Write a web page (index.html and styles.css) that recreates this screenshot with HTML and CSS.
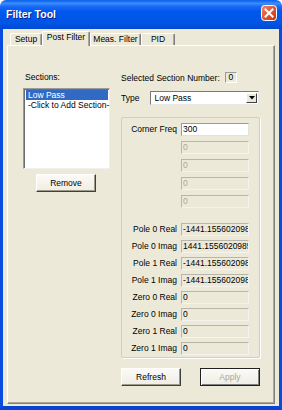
FILE: index.html
```html
<!DOCTYPE html>
<html lang="en">
  <head>
    <meta charset="UTF-8" />
    <meta name="viewport" content="width=device-width, initial-scale=1.0" />
    <title>Filter Tool</title>
    <link rel="stylesheet" href="styles.css">
  </head>

  <body>
    <div class="window">
      <div class="titlebar">
        <span class="title">Filter Tool</span>
        <span class="close">
          <svg width="16" height="16" viewBox="0 0 16 16">
            <defs>
              <linearGradient id="rod" x1="0" y1="0" x2="1" y2="1">
                <stop offset="0" stop-color="#f08a6c" />
                <stop offset="0.45" stop-color="#e15a36" />
                <stop offset="1" stop-color="#c1360f" />
              </linearGradient>
            </defs>
            <rect x="0.5" y="0.5" width="15" height="15" rx="3" fill="url(#rod)" stroke="#fff" />
            <path d="M4.5 4.5 L11.5 11.5 M11.5 4.5 L4.5 11.5" stroke="#fff" stroke-width="2" stroke-linecap="square" />
          </svg>
        </span>
      </div>

      <div class="frame">
        <div class="client">
          <nav class="tabs">
            <span class="tab setup">Setup</span>
            <span class="tab post valgt">Post Filter</span>
            <span class="tab meas">Meas. Filter</span>
            <span class="tab pid">PID</span>
          </nav>

          <div class="panel">
            <div class="sections">
              <div class="label">Sections:</div>
              <div class="listbox">
                <div class="item selected">Low Pass</div>
                <div class="item">-Click to Add Section-</div>
              </div>
              <button class="btn remove">Remove</button>
            </div>

            <div class="detail">
              <div class="selrow">
                <span>Selected Section Number:</span>
                <span class="numbox">0</span>
              </div>
              <div class="typerow">
                <span>Type</span>
                <div class="combo">
                  <span>Low Pass</span>
                  <span class="drop">
                    <svg width="6" height="4" viewBox="0 0 6 4"><path d="M0 0 H6 L3 3.5 Z" fill="#000" /></svg>
                  </span>
                </div>
              </div>

              <div class="group">
                <div class="rows top">
                  <span class="name">Corner Freq</span><div class="field">300</div>
                  <span class="name"></span><div class="field disabled">0</div>
                  <span class="name"></span><div class="field disabled">0</div>
                  <span class="name"></span><div class="field disabled">0</div>
                  <span class="name"></span><div class="field disabled">0</div>
                </div>
                <div class="rows bottom">
                  <span class="name">Pole 0 Real</span><div class="field readonly">-1441.155602098</div>
                  <span class="name">Pole 0 Imag</span><div class="field readonly">1441.1556020985</div>
                  <span class="name">Pole 1 Real</span><div class="field readonly">-1441.155602098</div>
                  <span class="name">Pole 1 Imag</span><div class="field readonly">-1441.155602098</div>
                  <span class="name">Zero 0 Real</span><div class="field readonly">0</div>
                  <span class="name">Zero 0 Imag</span><div class="field readonly">0</div>
                  <span class="name">Zero 1 Real</span><div class="field readonly">0</div>
                  <span class="name">Zero 1 Imag</span><div class="field readonly">0</div>
                </div>
              </div>

              <div class="buttons">
                <button class="btn">Refresh</button>
                <button class="btn default" disabled>Apply</button>
              </div>
            </div>
          </div>
        </div>
      </div>
    </div>
  </body>
</html>
```

FILE: styles.css
```css
* {
  box-sizing: border-box;
}

body {
  margin: 0;
  font-family: "Liberation Sans", Arial, sans-serif;
  font-size: 8.5px;
  color: #000;
}

.window {
  width: 282px;
  height: 410px;
  overflow: hidden;
}

.titlebar {
  height: 29px;
  display: flex;
  justify-content: space-between;
  align-items: flex-start;
  padding: 0 5px 0 6px;
  border-radius: 6px 6px 0 0;
  background: linear-gradient(#0a5fe8 0%, #3a8dfd 12%, #1a6af5 22%, #0058ee 40%, #0055e5 80%, #0049d2 100%);
}

.title {
  margin-top: 8px;
  color: #fff;
  font-weight: bold;
  font-size: 10.5px;
  text-shadow: 1px 1px #0a1c8c;
}

.close {
  margin-top: 5px;
  width: 16px;
  height: 16px;
}

.close svg {
  display: block;
}

.frame {
  height: 381px;
  border-left: 3px solid #0b4be0;
  border-right: 3px solid #0b4be0;
  border-bottom: 4px solid #0a42d2;
}

.client {
  height: 100%;
  background-color: #ece9d8;
  padding: 2px 4px 0 4px;
}

.tabs {
  height: 14px;
  display: flex;
  align-items: flex-end;
  padding-left: 3px;
  position: relative;
  z-index: 1;
}

.tab {
  height: 12px;
  line-height: 11px;
  text-align: center;
  border: 1px solid #fff;
  border-bottom: none;
  border-right-color: #808080;
  box-shadow: inset -1px 0 #aca899;
  border-radius: 2px 2px 0 0;
  background-color: #ece9d8;
}

.setup {
  width: 32px;
}

.post {
  width: 48px;
}

.meas {
  width: 51px;
}

.pid {
  width: 34px;
}

.tab.valgt {
  height: 15px;
  line-height: 11px;
  padding-bottom: 3px;
  margin-bottom: -1px;
}

.panel {
  height: 359px;
  display: flex;
  gap: 11px;
  padding: 26px 0 0 15px;
  border: 1px solid #fff;
  border-right-color: #808080;
  border-bottom-color: #808080;
  box-shadow: inset -1px -1px #aca899;
}

.sections {
  width: 87px;
  display: flex;
  flex-direction: column;
}

.label {
  line-height: 11px;
  padding-left: 2px;
}

.listbox {
  margin-top: 5px;
  height: 81px;
  background: #fff;
  border: 1px solid;
  border-color: #9a9a9a #f0f0f0 #f0f0f0 #9a9a9a;
  box-shadow: inset 1px 1px #6e6e6e;
  padding: 1px 1px 0 2px;
}

.item {
  height: 10px;
  line-height: 10px;
  padding-left: 2px;
  white-space: nowrap;
}

.item.selected {
  background-color: #316ac5;
  color: #fff;
}

.btn {
  font-family: inherit;
  font-size: 8.5px;
  color: #000;
  width: 60px;
  height: 18px;
  padding: 0;
  background: linear-gradient(#fbfaf6, #efede3);
  border: 1px solid;
  border-color: #fff #404040 #404040 #fff;
  box-shadow: inset -1px -1px #9d9a8c;
}

.remove {
  margin: 5px 0 0 13px;
}

.detail {
  width: 139px;
  display: flex;
  flex-direction: column;
}

.selrow {
  height: 11px;
  display: flex;
  align-items: center;
  gap: 5px;
}

.numbox {
  width: 12px;
  height: 11px;
  line-height: 9px;
  text-align: center;
  border: 1px solid;
  border-color: #9a9a9a #fff #fff #9a9a9a;
}

.typerow {
  margin-top: 8px;
  display: flex;
  align-items: center;
  gap: 11px;
}

.combo {
  width: 109px;
  height: 14px;
  display: flex;
  align-items: center;
  justify-content: space-between;
  background: #fff;
  border: 1px solid;
  border-color: #7a7a7a #e8e8e8 #e8e8e8 #7a7a7a;
  padding: 0 1px 0 3px;
}

.drop {
  width: 11px;
  height: 10px;
  display: flex;
  align-items: center;
  justify-content: center;
  background: #ece9d8;
  border: 1px solid;
  border-color: #fff #404040 #404040 #fff;
}

.drop svg {
  display: block;
}

.group {
  margin-top: 12px;
  height: 241px;
  border: 1px solid #d0d0bf;
  border-radius: 2px;
  box-shadow: 1px 1px #fff;
  padding-top: 5px;
}

.rows {
  display: grid;
  grid-template-columns: 55px 68px;
  column-gap: 4px;
}

.rows.top {
  row-gap: 5px;
}

.rows.bottom {
  margin-top: 15px;
  row-gap: 4px;
}

.name {
  line-height: 13px;
  text-align: right;
  white-space: nowrap;
}

.field {
  height: 13px;
  line-height: 11px;
  padding-left: 1px;
  overflow: hidden;
  white-space: nowrap;
  background: #fff;
  border: 1px solid;
  border-color: #9a9a9a #e4e2d6 #e4e2d6 #9a9a9a;
}

.field.disabled {
  background: #ece9d8;
  color: #aca899;
  border-color: #b8b6aa #f4f3ee #f4f3ee #b8b6aa;
}

.field.readonly {
  background: #ece9d8;
  border-color: #b8b6aa #f4f3ee #f4f3ee #b8b6aa;
}

.buttons {
  margin-top: 10px;
  display: flex;
  justify-content: space-between;
}

.btn.default {
  color: #aca899;
  border-color: #202020;
  box-shadow: inset 1px 1px #fff, inset -1px -1px #808080;
}
```
